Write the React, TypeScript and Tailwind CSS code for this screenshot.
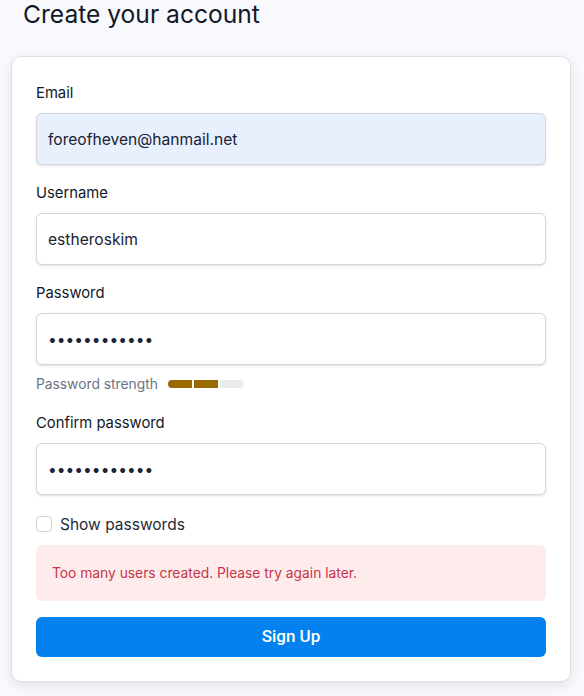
import React from 'react';

function Field({
  label,
  value,
  type = 'text',
  autofill = false,
}: {
  label: string;
  value: string;
  type?: string;
  autofill?: boolean;
}) {
  return (
    <div className="flex flex-col">
      <label className="pt-px text-[14.8px] leading-5 text-[#111827] mb-[10px]">{label}</label>
      <input
        type={type}
        value={value}
        readOnly
        className={
          'h-[52px] w-full rounded-md border border-[#d4d7dd] pl-[11px] pr-3 text-[15.6px] text-[#1a2233] shadow-sm outline-none font-[Inter,sans-serif] ' +
          (autofill ? 'bg-[#e8f0fe]' : 'bg-white')
        }
      />
    </div>
  );
}

export default function App() {
  return (
    <div className="min-h-[696px] bg-[#f8f9fc] font-[Inter,'Noto_Sans',sans-serif]">
      <div className="ml-[11px] w-[560px]">
        <h1 className="ml-[12px] text-[24.6px] leading-[28px] text-[#111827]">Create your account</h1>
        <div className="mt-[28px] rounded-[10px] border border-[#dcdfe4] bg-white px-6 pt-[25px] pb-6 shadow-[0_4px_12px_rgba(0,0,0,0.09)]">
          <div className="flex flex-col gap-[17px]">
            <Field label="Email" value="foreofheven@hanmail.net" autofill />
            <Field label="Username" value="estheroskim" />
            <div className="mb-[2px]">
              <Field label="Password" value="abcdefghijkl" type="password" />
              <div className="mt-[10px] flex h-[18px] items-center gap-[10px]">
                <span className="text-[13.8px] text-[#6b7280]">Password strength</span>
                <div className="flex h-2 w-[76px] gap-[2px] overflow-hidden rounded-full">
                  <div className="flex-1 bg-[#966a00]" />
                  <div className="flex-1 bg-[#966a00]" />
                  <div className="flex-1 bg-[#e9eaec]" />
                </div>
              </div>
            </div>
            <Field label="Confirm password" value="abcdefghijkl" type="password" />
          </div>
          <label className="mt-[19px] flex h-5 items-center gap-[8px]">
            <span className="h-4 w-4 rounded-[4px] border border-[#cdd1d6] bg-white" />
            <span className="pt-px text-[15.5px] text-[#1f2937]">Show passwords</span>
          </label>
          <div className="mt-[11px] flex h-14 items-center rounded-md bg-[#feecec] px-4 text-[13.8px] text-[#c7354a]">
            Too many users created. Please try again later.
          </div>
          <button className="mt-4 h-10 w-full rounded-md bg-[#0381ee] text-[17px] font-medium text-white font-[Roboto,sans-serif]">
            Sign Up
          </button>
        </div>
      </div>
    </div>
  );
}
